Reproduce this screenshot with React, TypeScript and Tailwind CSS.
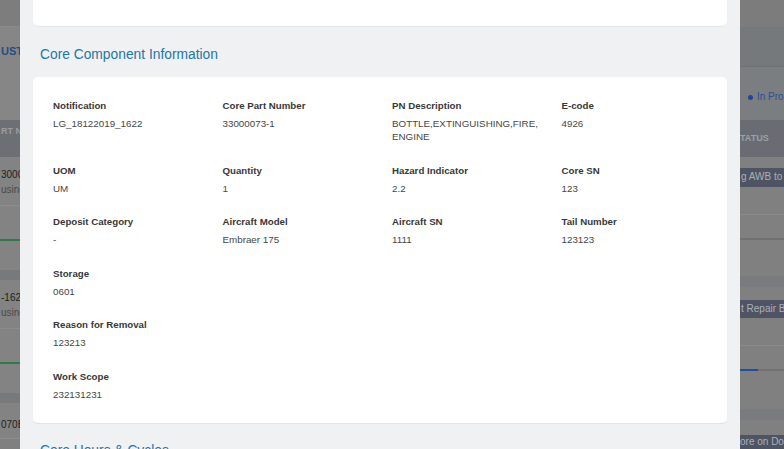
const fields = [
  { label: "Notification", value: "LG_18122019_1622" },
  { label: "Core Part Number", value: "33000073-1" },
  { label: "PN Description", value: "BOTTLE,EXTINGUISHING,FIRE, ENGINE" },
  { label: "E-code", value: "4926" },
  { label: "UOM", value: "UM" },
  { label: "Quantity", value: "1" },
  { label: "Hazard Indicator", value: "2.2" },
  { label: "Core SN", value: "123" },
  { label: "Deposit Category", value: "-" },
  { label: "Aircraft Model", value: "Embraer 175" },
  { label: "Aircraft SN", value: "1111" },
  { label: "Tail Number", value: "123123" },
]

const wideFields = [
  { label: "Storage", value: "0601" },
  { label: "Reason for Removal", value: "123213" },
  { label: "Work Scope", value: "232131231" },
]

const Field = ({ label, value, className = "" }: { label: string; value: string; className?: string }) => {
  return (
    <div className={`flex flex-col gap-[5px] ${className}`}>
      <div className="text-[9.7px] leading-[12px] font-bold text-[#383838]">{label}</div>
      <div className="text-[9.8px] leading-[13px] text-[#464646]">{value}</div>
    </div>
  )
}

// dimmed page behind the modal, left edge
const LeftPage = () => {
  return (
    <div className="flex flex-col w-[20px] overflow-hidden text-[10px] leading-[12px] whitespace-nowrap">
      <div className="h-[27px] bg-[#7d7d7d] border-b border-[#8a8a8a]" />
      <div className="h-[93px] bg-[#868686] pt-[18px] pl-[1px] text-[11px] font-bold text-[#1f4f83]">UST</div>
      <div className="h-[37px] bg-[#6c6f73] pt-[5px] pl-[1px] text-[9px] font-bold text-[#9a9da2]">RT N</div>
      {["3000", "-1622", "070B"].map((num, i) => (
        <div key={num} className="flex flex-col">
          <div className={`${i === 2 ? "h-[36px] pt-[16px]" : "h-[49px] pt-[12px]"} bg-[#838383] border-b border-[#8c8c8c] pl-[1px]`}>
            <div className="text-[#1e1e1e]">{num}</div>
            {i < 2 && <div className="mt-[3px] text-[#4a4a4a]">usine</div>}
          </div>
          {i < 2 && (
            <>
              <div className="h-[35px] bg-[#838383] border-b-2 border-[#2f7a4d]" />
              <div className="h-[29px] bg-[#838383]" />
              <div className="h-[10px] bg-[#78797b]" />
            </>
          )}
        </div>
      ))}
    </div>
  )
}

// dimmed page behind the modal, right edge
const RightPage = () => {
  return (
    <div className="flex flex-col w-[52px] overflow-hidden text-[10px] leading-[12px] whitespace-nowrap">
      <div className="h-[27px] bg-[#7c7c7c]" />
      <div className="h-[40px] bg-[#76797c] border-b border-[#6f7275]" />
      <div className="h-[53px] bg-[#7b7e81] flex items-center gap-[4px] pl-[16px] pt-[8px] text-[#2a4f92]">
        <span className="shrink-0 w-[5px] h-[5px] rounded-full bg-[#1d469a]" />
        <span>In Pro</span>
      </div>
      <div className="h-[37px] bg-[#696d73] pt-[12px] pl-[8px] text-[9px] font-bold text-[#9ca0a7]">TATUS</div>
      <div className="h-[58px] bg-[#808080] border-b border-[#8a8a8a] pt-[11px]">
        <div className="h-[19px] bg-[#4e5463] text-[#aab0ba] pl-[9px] pt-[3px]">g AWB to</div>
      </div>
      <div className="h-[25px] bg-[#808080] border-b-2 border-[#717171]" />
      <div className="h-[37px] bg-[#808080]" />
      <div className="h-[11px] bg-[#797b7f]" />
      <div className="h-[59px] bg-[#808080] border-b border-[#8a8a8a] pt-[13px]">
        <div className="h-[18px] bg-[#4e5463] text-[#aab0ba] pl-[9px] pt-[3px]">t Repair Bl</div>
      </div>
      <div className="h-[25px] bg-[#808080] flex items-end">
        <div className="h-[2px] w-[26px] bg-[#1d4f9e]" />
        <div className="h-[2px] flex-1 bg-[#717171]" />
      </div>
      <div className="h-[38px] bg-[#808080]" />
      <div className="h-[11px] bg-[#797b7f]" />
      <div className="h-[15px] bg-[#808080]" />
      <div className="h-[14px] bg-[#4e5463] text-[#aab0ba] pl-[8px] pt-[1px]">ore on Doc</div>
    </div>
  )
}

const App = () => {
  return (
    <div
      className="relative w-[784px] h-[449px] overflow-hidden flex justify-between bg-[#808080]"
      style={{ fontFamily: '"Liberation Sans", Arial, sans-serif' }}
    >
      <LeftPage />
      <RightPage />

      <div className="absolute left-[20px] top-0 w-[720px] h-[449px] bg-[#f0f1f3] px-[13px] flex flex-col">
        <div className="h-[26px] shrink-0 bg-white rounded-b-[5px] shadow-[0_1px_1px_rgba(0,0,0,0.05)]" />

        <div className="pt-[21px] pb-[14px] pl-[7px] text-[13.8px] leading-[16px] text-[#1b76ad]">
          Core Component Information
        </div>

        <div className="shrink-0 bg-white rounded-[5px] shadow-[0_1px_1px_rgba(0,0,0,0.06)] pt-[23px] pb-[22.5px] px-5">
          <div className="grid grid-cols-4 gap-x-6 gap-y-[21.5px]">
            {fields.map((f) => (
              <Field key={f.label} label={f.label} value={f.value} />
            ))}
            {wideFields.map((f) => (
              <Field key={f.label} label={f.label} value={f.value} className="col-span-4" />
            ))}
          </div>
        </div>

        <div className="pt-[20px] pl-[7px] text-[13.8px] leading-[16px] text-[#1b76ad]">
          Core Hours &amp; Cycles
        </div>
      </div>
    </div>
  )
}

export default App
